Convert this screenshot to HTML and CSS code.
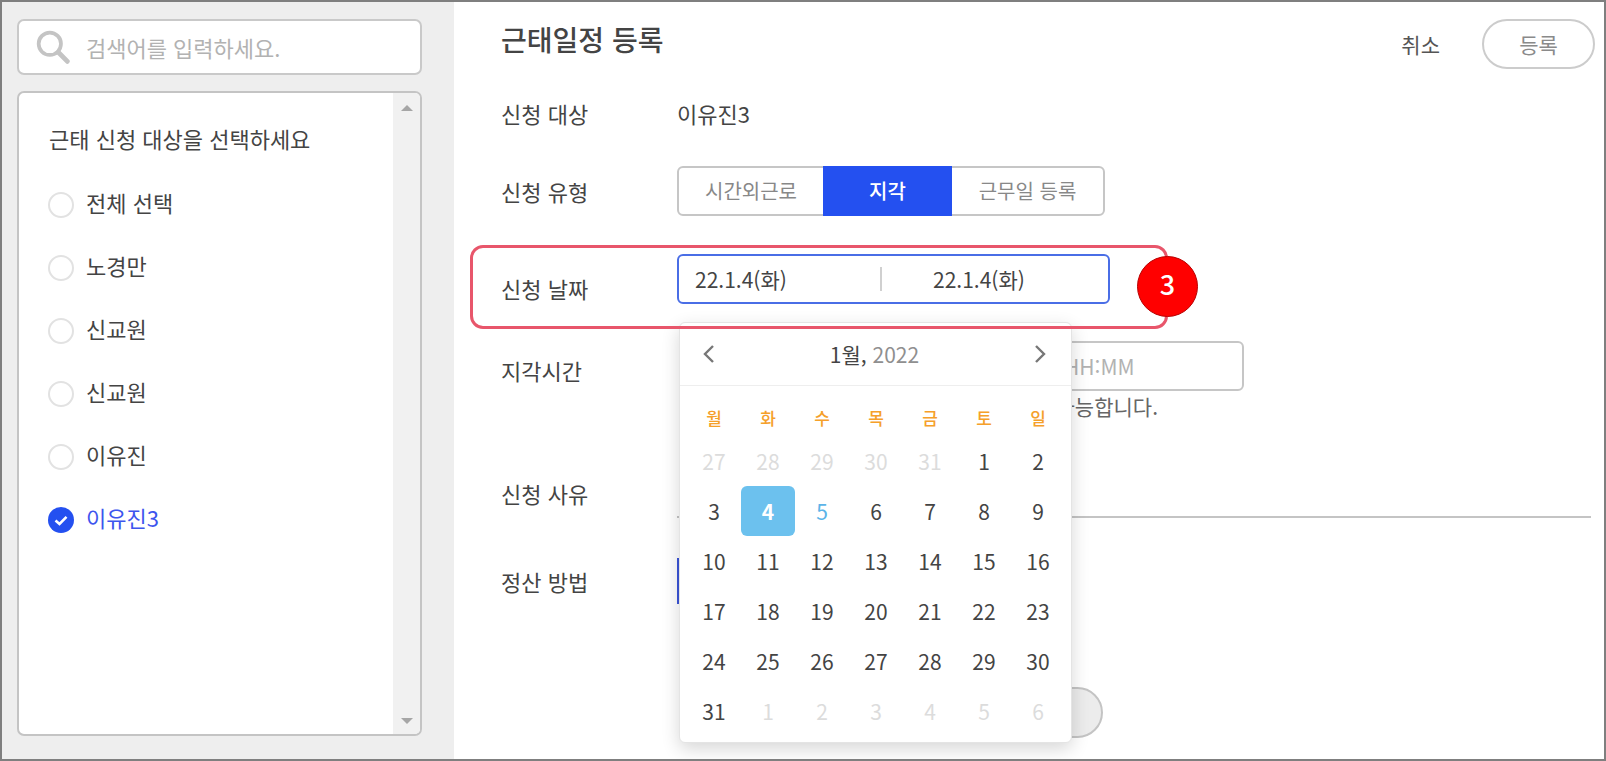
FILE: index.html
```html
<!DOCTYPE html>
<html lang="ko">
<head>
<meta charset="utf-8">
<title>근태일정 등록</title>
<link rel="stylesheet" href="styles.css">
</head>
<body>
<div class="frame">
  <aside class="sidebar">
    <div class="search">
      <svg class="search-icon" viewBox="0 0 32 32" width="34" height="34"><circle cx="13" cy="13" r="10.5" fill="none" stroke="#c4c4c4" stroke-width="3.5"/><path d="M21 21 L29.5 29.5" stroke="#c4c4c4" stroke-width="4.5" stroke-linecap="round"/></svg>
      <span class="search-text">검색어를 입력하세요.</span>
    </div>
    <div class="list">
      <div class="list-body">
        <div class="list-title">근태 신청 대상을 선택하세요</div>
        <div class="item"><span class="radio"></span>전체 선택</div>
        <div class="item"><span class="radio"></span>노경만</div>
        <div class="item"><span class="radio"></span>신교원</div>
        <div class="item"><span class="radio"></span>신교원</div>
        <div class="item"><span class="radio"></span>이유진</div>
        <div class="item item-on">
          <svg class="check" viewBox="0 0 26 26" width="26" height="26"><circle cx="13" cy="13" r="13" fill="#2450f0"/><path d="M7.5 13.5 L11.5 17 L18.5 9.8" fill="none" stroke="#fff" stroke-width="2.6"/></svg>
          이유진3
        </div>
      </div>
      <div class="scroll">
        <span class="arrow-up"></span>
        <span class="arrow-down"></span>
      </div>
    </div>
  </aside>

  <main class="main">
    <header class="head">
      <h1 class="title">근태일정 등록</h1>
      <div class="actions">
        <span class="cancel">취소</span>
        <span class="submit">등록</span>
      </div>
    </header>

    <div class="row row-target">
      <div class="label">신청 대상</div>
      <div class="value">이유진3</div>
    </div>

    <div class="row row-type">
      <div class="label">신청 유형</div>
      <div class="seg">
        <span class="seg-a">시간외근로</span>
        <span class="seg-b">지각</span>
        <span class="seg-c">근무일 등록</span>
      </div>
    </div>

    <div class="row row-date">
      <div class="label label-low">신청 날짜</div>
      <div class="date">
        <span class="date-a">22.1.4(화)</span>
        <span class="date-sep"></span>
        <span class="date-b">22.1.4(화)</span>
      </div>
    </div>

    <div class="row row-late">
      <div class="label label-mid">지각시간</div>
      <div class="late">
        <div class="time"><span class="time-text">HH:MM</span></div>
        <div class="note">가능합니다.</div>
      </div>
    </div>

    <div class="row row-reason">
      <div class="label">신청 사유</div>
      <div class="reason"></div>
    </div>

    <div class="row row-pay">
      <div class="label label-tight">정산 방법</div>
      <div class="pay"></div>
    </div>

    <div class="row row-pill">
      <div class="pill"></div>
    </div>

    <section class="cal">
      <div class="cal-head">
        <svg class="chev" viewBox="0 0 14 20" width="14" height="20"><path d="M11 2 L3 10 L11 18" fill="none" stroke="#777" stroke-width="2.4"/></svg>
        <div class="cal-title">1월, <span class="cal-year">2022</span></div>
        <svg class="chev" viewBox="0 0 14 20" width="14" height="20"><path d="M3 2 L11 10 L3 18" fill="none" stroke="#777" stroke-width="2.4"/></svg>
      </div>
      <div class="week">
        <span>월</span><span>화</span><span>수</span><span>목</span><span>금</span><span>토</span><span>일</span>
      </div>
      <div class="days">
        <span class="off">27</span><span class="off">28</span><span class="off">29</span><span class="off">30</span><span class="off">31</span><span>1</span><span>2</span>
        <span>3</span><span class="sel">4</span><span class="next">5</span><span>6</span><span>7</span><span>8</span><span>9</span>
        <span>10</span><span>11</span><span>12</span><span>13</span><span>14</span><span>15</span><span>16</span>
        <span>17</span><span>18</span><span>19</span><span>20</span><span>21</span><span>22</span><span>23</span>
        <span>24</span><span>25</span><span>26</span><span>27</span><span>28</span><span>29</span><span>30</span>
        <span>31</span><span class="off">1</span><span class="off">2</span><span class="off">3</span><span class="off">4</span><span class="off">5</span><span class="off">6</span>
      </div>
    </section>

    <div class="callout"></div>
    <div class="badge">3</div>
  </main>
</div>
</body>
</html>
```
FILE: styles.css
```css
* { box-sizing: border-box; }
html, body { margin: 0; padding: 0; background: #fff; }
body {
  font-family: "Noto Sans CJK KR", "Noto Sans", sans-serif;
  font-size: 21px;
  color: #444;
}
.frame {
  display: flex;
  width: 1606px;
  height: 761px;
  border: 2px solid #7f7f7f;
  overflow: hidden;
}

/* sidebar */
.sidebar {
  flex: 0 0 452px;
  display: flex;
  flex-direction: column;
  gap: 16px;
  padding: 17px 32px 0 15px;
  background: #eee;
}
.search {
  display: flex;
  align-items: center;
  gap: 16px;
  height: 56px;
  padding-left: 17px;
  background: #fff;
  border: 2px solid #c9c9c9;
  border-radius: 7px;
}
.search-text { color: #b2b2b2; font-size: 22px; line-height: 30px; }
.list {
  display: flex;
  height: 645px;
  background: #fff;
  border: 2px solid #c4c4c4;
  border-radius: 7px;
  overflow: hidden;
}
.list-body { flex: 1; padding: 30px 0 0 30px; font-size: 22px; }
.list-title { height: 30px; line-height: 30px; margin-bottom: 19px; }
.item {
  display: flex;
  align-items: center;
  gap: 12px;
  height: 63px;
  padding-bottom: 4px;
  margin-left: -1px;
}
.radio, .check {
  flex: none;
  width: 26px;
  height: 26px;
  position: relative;
  top: 3px;
}
.radio { border: 2.5px solid #e2e2e2; border-radius: 50%; background: #fff; }
.item-on { color: #3d55ee; }
.scroll {
  flex: 0 0 27px;
  display: flex;
  flex-direction: column;
  justify-content: space-between;
  align-items: center;
  padding: 12px 0 10px;
  background: #f1f1f1;
}
.arrow-up, .arrow-down { width: 0; height: 0; border-left: 6px solid transparent; border-right: 6px solid transparent; }
.arrow-up { border-bottom: 6px solid #a6a6a6; }
.arrow-down { border-top: 6px solid #a6a6a6; }

/* main */
.main {
  position: relative;
  flex: 1;
  padding: 17px 9px 0 47px;
}
.head { display: flex; justify-content: space-between; align-items: flex-start; height: 50px; }
.title { margin: 0; font-size: 28px; font-weight: 500; line-height: 40px; color: #444; }
.actions { display: flex; align-items: center; gap: 42px; }
.cancel { line-height: 50px; font-size: 21px; color: #555; }
.submit {
  display: flex;
  align-items: center;
  justify-content: center;
  width: 113px;
  height: 50px;
  border: 2px solid #ccc;
  border-radius: 25px;
  color: #8a8a8a;
}
.row { display: flex; align-items: flex-start; height: 50px; }
.label { flex: 0 0 176px; font-size: 22px; line-height: 50px; }
.label-low { padding-top: 9px; }
.label-mid { padding-top: 4px; }
.label-tight { line-height: 46px; }
.value { font-size: 22px; line-height: 50px; }
.row-target { margin-top: 19px; }
.row-type { margin-top: 28px; }
.row-date { margin-top: 38px; }
.row-late { margin-top: 37px; }
.row-reason { margin-top: 77px; padding-right: 4px; }
.row-pay { margin-top: 40px; height: 46px; }
.row-pill { margin-top: 83px; padding-left: 186px; }

.seg {
  display: flex;
  width: 428px;
  height: 50px;
  border: 2px solid #c6c6c6;
  border-radius: 6px;
  color: #888;
  font-size: 20px;
  line-height: 46px;
  text-align: center;
}
.seg-a { flex: 0 0 144px; }
.seg-b { flex: 0 0 129px; margin: -2px 0; line-height: 50px; background: #2450f0; color: #fff; font-weight: 500; }
.seg-c { flex: 1; }

.date {
  display: flex;
  align-items: center;
  width: 433px;
  height: 50px;
  padding-left: 16px;
  border: 2px solid #4a6ee6;
  border-radius: 6px;
}
.date-a { flex: 0 0 185px; }
.date-sep { flex: none; width: 2px; height: 24px; background: #d0d0d0; }
.date-b { margin-left: 51px; }

.late { display: flex; flex-direction: column; }
.time {
  width: 557px;
  height: 50px;
  margin-left: 10px;
  padding-left: 375px;
  border: 2px solid #c6c6c6;
  border-radius: 6px;
  line-height: 46px;
  color: #b2b2b2;
}
.note { width: 481px; margin-top: 2px; line-height: 26px; text-align: right; color: #666; white-space: nowrap; }

.reason { flex: 1; height: 50px; border-bottom: 2px solid #c4c4c4; }
.pay { width: 380px; height: 46px; background: #3b55d8; }
.pill { width: 416px; height: 51px; background: #ececec; border: 2px solid #c4c4c4; border-radius: 26px; }

/* calendar */
.cal {
  position: absolute;
  left: 225px;
  top: 320px;
  width: 393px;
  height: 421px;
  padding: 0 6px 0 7px;
  background: #fff;
  border: 1px solid #e4e4e4;
  border-radius: 6px;
  box-shadow: 0 6px 18px rgba(0, 0, 0, .16);
}
.cal-head {
  display: flex;
  align-items: center;
  justify-content: space-between;
  height: 63px;
  margin: 0 -6px 0 -7px;
  padding: 0 24px 0 22px;
  border-bottom: 1px solid #eee;
}
.cal-title { color: #444; }
.cal-year { color: #8f8f8f; }
.week, .days { display: grid; grid-template-columns: repeat(7, 54px); text-align: center; }
.week { height: 42px; margin-top: 8px; line-height: 48px; font-size: 17px; font-weight: 500; color: #f5a02a; }
.days { grid-auto-rows: 50px; line-height: 50px; }
.off { color: #dcdcdc; }
.next { color: #5cb4e8; }
.sel { background: #6cc1ee; color: #fff; font-weight: 700; border-radius: 6px; }

/* annotation overlays */
.callout {
  position: absolute;
  left: 16px;
  top: 243px;
  width: 698px;
  height: 84px;
  border: 3px solid #e8566b;
  border-radius: 13px;
}
.badge {
  position: absolute;
  left: 683px;
  top: 254px;
  width: 61px;
  height: 61px;
  display: flex;
  align-items: center;
  justify-content: center;
  padding-bottom: 6px;
  background: #f00;
  border: 1px solid #b80000;
  border-radius: 50%;
  color: #fff;
  font-size: 27px;
  font-weight: 500;
}
```
